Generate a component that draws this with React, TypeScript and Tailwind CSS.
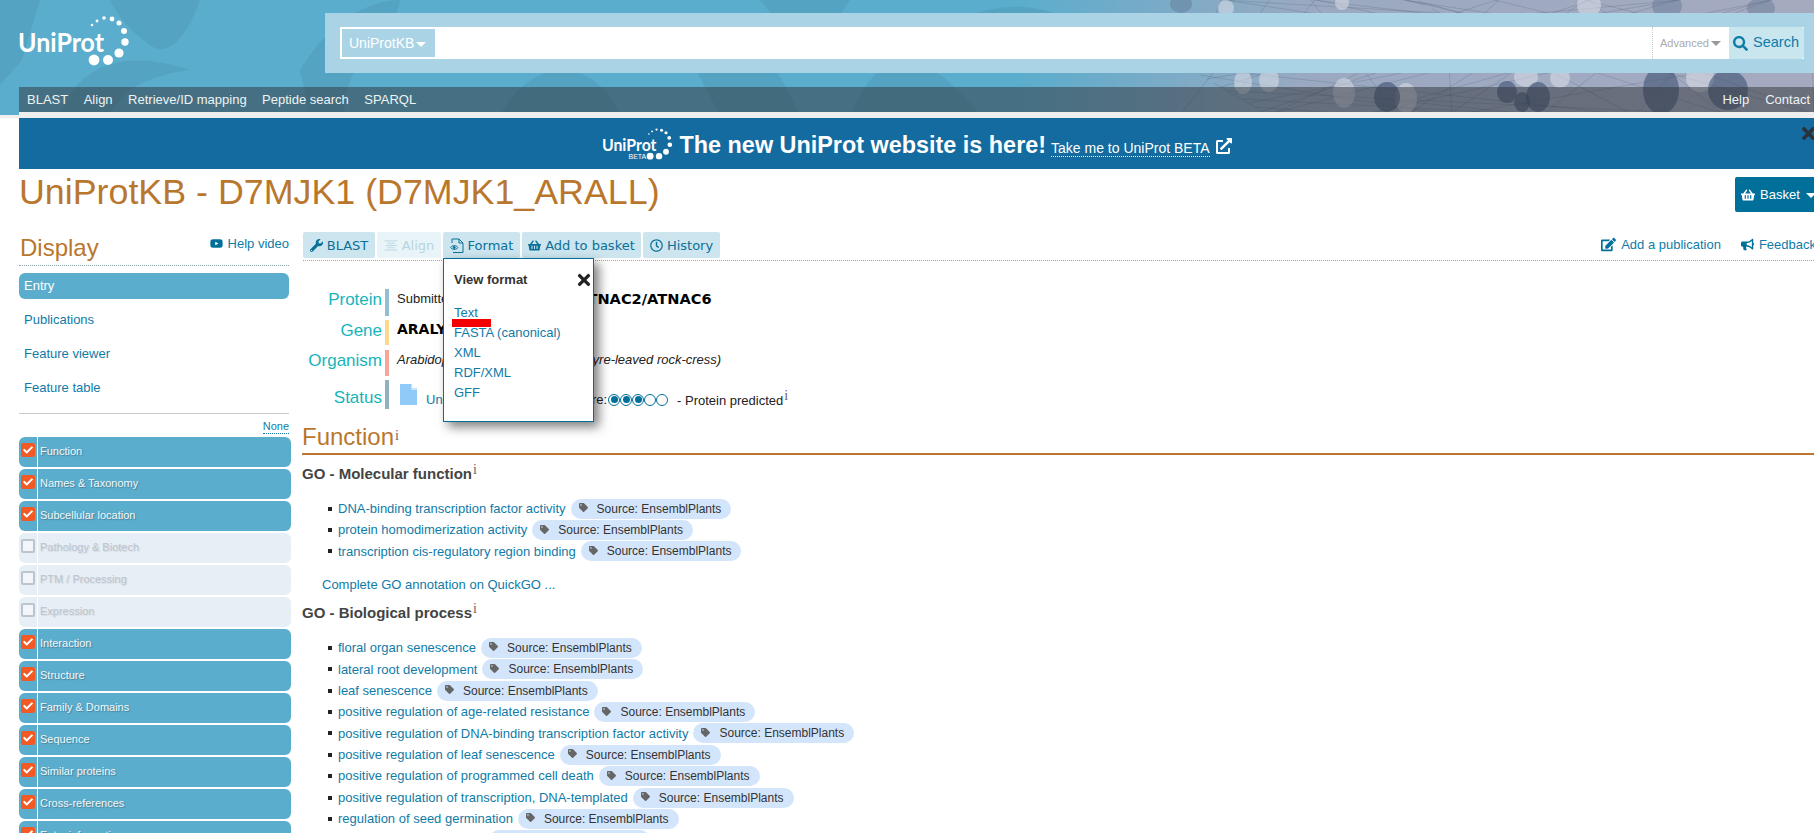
import { FaBullhorn, FaCheck, FaEdit, FaExternalLinkAlt, FaRegClock, FaSearch, FaShoppingBasket, FaTag, FaTimes, FaWrench, FaYoutube } from "react-icons/fa";

const sidebarItems = [
  { label: "Function", on: true },
  { label: "Names & Taxonomy", on: true },
  { label: "Subcellular location", on: true },
  { label: "Pathology & Biotech", on: false },
  { label: "PTM / Processing", on: false },
  { label: "Expression", on: false },
  { label: "Interaction", on: true },
  { label: "Structure", on: true },
  { label: "Family & Domains", on: true },
  { label: "Sequence", on: true },
  { label: "Similar proteins", on: true },
  { label: "Cross-references", on: true },
  { label: "Entry information", on: true },
];

const molecular = [
  "DNA-binding transcription factor activity",
  "protein homodimerization activity",
  "transcription cis-regulatory region binding",
];

const biological = [
  "floral organ senescence",
  "lateral root development",
  "leaf senescence",
  "positive regulation of age-related resistance",
  "positive regulation of DNA-binding transcription factor activity",
  "positive regulation of leaf senescence",
  "positive regulation of programmed cell death",
  "positive regulation of transcription, DNA-templated",
  "regulation of seed germination",
  "regulation of transcription",
];

const darkBalls = [
  [1387, 97, 13, 15],
  [1507, 92, 10, 11],
  [1538, 97, 12, 15],
  [1522, 102, 8, 10],
  [1661, 90, 18, 24],
  [1728, 90, 20, 20],
];

const topBalls = [
  [1667, 6, 15, 12],
  [1761, 8, 14, 10],
  [1181, 4, 11, 9],
];

const lightBalls = [
  [1344, 93, 11, 15],
  [1406, 98, 11, 15],
  [1269, 80, 10, 12],
  [1243, 82, 9, 12],
  [1526, 77, 12, 10],
  [1560, 78, 10, 10],
  [1589, 5, 12, 12],
  [1342, 3, 7, 7],
  [1226, 8, 8, 8],
  [1700, 78, 14, 14],
];

const blobs = [
  "M0 0 L40 0 L22 60 L0 85 Z",
  "M60 115 C80 60 130 50 190 70 C150 75 120 90 110 115 Z",
  "M110 0 L200 0 C190 30 170 60 150 45 C130 30 120 20 110 0 Z",
  "M300 70 C330 20 370 0 400 0 C395 40 340 60 345 115 L310 115 Z",
  "M500 115 C530 60 590 50 620 115 Z",
  "M680 40 C720 0 760 30 800 115 L720 115 Z",
  "M760 0 L850 0 L810 60 Z",
  "M850 115 C880 40 930 50 980 115 Z",
  "M960 20 C1000 0 1060 0 1090 40 C1060 70 990 60 960 20 Z",
];

function Logo({ beta }: { beta?: boolean }) {
  const dots = [
    [92, 25, 1.3],
    [97, 21, 1.4],
    [104, 18, 1.8],
    [112, 19, 2.4],
    [119, 23, 2.5],
    [124, 31, 3],
    [125, 42, 3.7],
    [119, 53, 4.6],
    [108, 60, 5],
    [94, 60, 5.4],
  ];
  return (
    <svg viewBox="15 14 115 52" className={beta ? "h-[33px] w-[73px]" : "h-[52px] w-[115px]"}>
      <text x="18" y="52" fill="#fff" fontSize="27" fontWeight="700" textLength="86" lengthAdjust="spacingAndGlyphs" fontFamily="Lato, sans-serif">
        UniProt
      </text>
      {beta && (
        <text x="60" y="65" fill="#fff" fontSize="11" fontFamily="Liberation Sans, sans-serif">
          BETA
        </text>
      )}
      {dots.map(([x, y, r]) => (
        <circle key={x} cx={x} cy={y} r={r} fill="#fff" />
      ))}
    </svg>
  );
}

function HeaderArt() {
  const lines = Array.from({ length: 46 }, (_, i) => {
    const x1 = 1180 + ((i * 137) % 640);
    const x2 = 1180 + ((i * 211 + 90) % 640);
    return <line key={i} x1={x1} y1={i % 2 ? 0 : 115} x2={x2} y2={(i * 37) % 115} stroke="#3f4c63" strokeOpacity="0.28" strokeWidth="0.7" />;
  });
  return (
    <svg viewBox="0 0 1814 115" className="absolute inset-0 h-[115px] w-[1814px]">
      <defs>
        <linearGradient id="headerBg" x1="0" y1="0" x2="1" y2="0">
          <stop offset="0.56" stopColor="#5aadcd" />
          <stop offset="0.72" stopColor="#9aa9c1" />
          <stop offset="1" stopColor="#a5aabf" />
        </linearGradient>
      </defs>
      <rect width="1814" height="115" fill="url(#headerBg)" />
      {blobs.map((d) => (
        <path key={d} d={d} fill="#3f7f9d" fillOpacity="0.22" />
      ))}
      {lines}
      {lightBalls.map(([cx, cy, rx, ry]) => (
        <ellipse key={cx} cx={cx} cy={cy} rx={rx} ry={ry} fill="#e4e6ee" fillOpacity="0.5" />
      ))}
      {topBalls.map(([cx, cy, rx, ry]) => (
        <ellipse key={cx} cx={cx} cy={cy} rx={rx} ry={ry} fill="#5d708f" fillOpacity="0.4" />
      ))}
      {darkBalls.map(([cx, cy, rx, ry]) => (
        <ellipse key={cx} cx={cx} cy={cy} rx={rx} ry={ry} fill="#3d5273" fillOpacity="0.6" />
      ))}
    </svg>
  );
}

function Caret({ className }: { className: string }) {
  return <span className={`inline-block h-0 w-0 border-x-[5px] border-t-[5px] border-x-transparent ${className}`} />;
}

function Info() {
  return <sup className="top-0 ml-[1px] align-[5px] font-['Liberation_Serif',serif] text-[14px] font-normal leading-none text-[#666]">i</sup>;
}

function ToolButton({ icon, label, disabled, className }: { icon: React.ReactNode; label: string; disabled?: boolean; className: string }) {
  return (
    <div
      className={`flex h-[26px] items-center justify-center gap-[4px] rounded-[2px] pt-[1px] font-['DejaVu_Sans',sans-serif] text-[13px] ${className} ${
        disabled ? "bg-[#e9f4f8] text-[#b5d6e2]" : "bg-[#cce5ee] text-[#0a7099]"
      }`}
    >
      {icon}
      <span>{label}</span>
    </div>
  );
}

function SidebarItem({ label, on }: { label: string; on: boolean }) {
  return (
    <div className={`flex h-[30px] w-[272px] rounded-[6px] ${on ? "bg-[#5aadcd]" : "bg-[#e6eff5]"}`}>
      <div className="flex w-[19px] shrink-0 justify-center border-r border-white pt-[6px]">
        {on ? (
          <span className="flex h-[14px] w-[14px] items-center justify-center rounded-[2px] bg-[#f15a24]">
            <FaCheck className="text-[10px] text-white" />
          </span>
        ) : (
          <span className="h-[14px] w-[14px] rounded-[2px] border-2 border-[#bcc4d0] bg-[#f2f6f9]" />
        )}
      </div>
      <span
        className={`pl-[2px] pt-[7px] text-[11px] leading-[14px] ${
          on ? "text-[#f2f8fb] [text-shadow:1px_1px_1px_#4a7f96]" : "text-[#bcc3cc] [text-shadow:1px_1px_1px_#d3d8de]"
        }`}
      >
        {label}
      </span>
    </div>
  );
}

function GoRow({ label }: { label: string }) {
  return (
    <li className="flex h-[21.4px] items-center">
      <span className="ml-[25px] mr-[6px] h-[4px] w-[4px] bg-[#222]" />
      <a className="text-[13px] text-[#0f7ba8]">{label}</a>
      <span className="ml-[5px] flex h-[20px] items-center rounded-full bg-[#d3e5fb] pl-[8px] pr-[10px] text-[12px] text-[#333]">
        <FaTag className="-mt-[2px] mr-[9px] text-[9px] text-[#666]" />
        Source: EnsemblPlants
      </span>
    </li>
  );
}

function EntryRow({ label, bar, className, labelClass, children }: { label: string; bar: string; className: string; labelClass: string; children: React.ReactNode }) {
  return (
    <div className={`flex ${className}`}>
      <div className={`w-[80px] text-right text-[17px] text-[#16b5bb] ${labelClass}`}>{label}</div>
      <div className={`ml-[3px] w-[4px] ${bar}`} />
      <div className="min-w-0 flex-1 whitespace-nowrap pl-[8px] text-[13px] text-[#222]">{children}</div>
    </div>
  );
}

export default function App() {
  return (
    <div className="h-[833px] w-[1814px] overflow-hidden bg-white font-['Liberation_Sans',Arial,sans-serif]">
      {/* top header */}
      <header className="relative h-[115px] w-[1814px]">
        <HeaderArt />
        <div className="relative flex h-[87px] items-start">
          <div className="ml-[15px] mt-[14px]">
            <Logo />
          </div>
          <div className="ml-[195px] mt-[13px] h-[60px] w-[1500px] bg-[#aad3e5] pl-[15px] pt-[14px]">
            <div className="flex h-[32px] w-[1464px] items-center bg-white pl-[2px]">
              <div className="flex h-[28px] w-[93px] items-center bg-[#aad3e5] pl-[7px] text-[14px] text-white">
                UniProtKB
                <Caret className="ml-[2px] mt-[3px] border-t-white" />
              </div>
              <div className="ml-auto flex h-[32px] w-[77px] items-center border-l border-dotted border-[#ccc] pl-[7px] text-[11px] text-[#aaa]">
                Advanced
                <Caret className="ml-[2px] border-t-[#999]" />
              </div>
              <div className="flex h-[32px] w-[75px] items-center rounded-r-[3px] bg-[#c9e5ee] pl-[4px] text-[14.5px] text-[#0f7ba8]">
                <FaSearch className="mr-[5px] text-[15px]" />
                Search
              </div>
            </div>
          </div>
        </div>
        <nav className="relative ml-[19px] flex h-[28px] w-[1795px] items-center justify-between border-b-[3px] border-[#eeeeee] bg-[#30333a]/50 pl-[8px] pr-[4px] text-[13px] text-[#eef3f5]">
          <div className="flex gap-[15.5px]">
            <span>BLAST</span>
            <span>Align</span>
            <span>Retrieve/ID mapping</span>
            <span>Peptide search</span>
            <span>SPARQL</span>
          </div>
          <div className="flex gap-[16px]">
            <span>Help</span>
            <span>Contact</span>
          </div>
        </nav>
      </header>
      <div className="h-[3px] bg-[#eeeeee]" />

      <div className="ml-[19px] w-[1810px]">
        {/* beta banner */}
        <div className="relative flex h-[51px] w-[1800px] items-center justify-center bg-[#136ba0] pr-[7px] text-white">
          <Logo beta />
          <span className="ml-[7px] mt-[5px] text-[23.4px] font-bold">The new UniProt website is here!</span>
          <a className="ml-[5px] mt-[9px] border-b border-dotted border-white text-[14px] leading-[16px]">Take me to UniProt BETA</a>
          <FaExternalLinkAlt className="ml-[6px] mt-[5px] text-[16px]" />
          <FaTimes className="absolute left-[1780px] top-[6px] text-[19px] text-[#2a3138]" />
        </div>

        <div className="flex h-[63px] w-[1800px] items-start justify-between">
          <h1 className="mt-[1px] text-[35.8px] leading-[44px] text-[#b9772e]">UniProtKB - D7MJK1 (D7MJK1_ARALL)</h1>
          <div className="mt-[8px] flex h-[35px] w-[84px] items-center rounded-[2px] bg-[#00709b] pl-[6px] pt-[1px] text-[13px] text-white">
            <FaShoppingBasket className="mr-[5px] text-[14px]" />
            Basket
            <Caret className="ml-[6px] border-t-white" />
          </div>
        </div>

        <div className="flex">
          {/* sidebar */}
          <aside className="w-[272px] shrink-0">
            <div className="flex h-[34px] w-[270px] items-start justify-between border-b border-dotted border-[#8aa4b0]">
              <span className="ml-[1px] mt-[1px] text-[24px] leading-[30px] text-[#b9772e]">Display</span>
              <span className="mt-[2px] flex items-center gap-[5px] text-[13px] text-[#0f7ba8]">
                <FaYoutube className="text-[#00709b]" />
                Help video
              </span>
            </div>
            <div className="mt-[7px] flex h-[26px] w-[270px] items-center rounded-[6px] bg-[#5aadcd] pl-[5px] text-[13px] text-white">Entry</div>
            <div className="flex w-[270px] flex-col border-b border-[#cccccc] pb-[8px] pl-[5px] pt-[4px] text-[13px] text-[#0f7ba8]">
              <span className="flex h-[34px] items-center">Publications</span>
              <span className="flex h-[34px] items-center">Feature viewer</span>
              <span className="flex h-[34px] items-center">Feature table</span>
            </div>
            <div className="flex h-[23px] w-[270px] justify-end pt-[5px] leading-[14px]">
              <span className="h-[15px] border-b border-dotted border-[#0f7ba8] text-[11px] text-[#0f7ba8]">None</span>
            </div>
            <div className="flex flex-col gap-[2px]">
              {sidebarItems.map((item) => (
                <SidebarItem key={item.label} label={item.label} on={item.on} />
              ))}
            </div>
          </aside>

          {/* main */}
          <main className="relative ml-[12px] w-[1513px] shrink-0">
            <div className="flex h-[29px] items-start justify-between border-b border-dotted border-[#6fb2c9]">
              <div className="flex gap-[2px]">
                <ToolButton className="w-[72px]" icon={<FaWrench className="text-[13px]" />} label="BLAST" />
                <ToolButton
                  className="w-[64px]"
                  disabled
                  icon={
                    <svg viewBox="0 0 14 12" className="h-[11px] w-[14px]" stroke="currentColor" strokeWidth="1">
                      <path d="M0 1h14M3 3.5h8M1 6h12M3 8.5h8M0 11h14" />
                    </svg>
                  }
                  label="Align"
                />
                <ToolButton
                  className="w-[77px]"
                  icon={
                    <svg viewBox="0 0 14 15" className="h-[15px] w-[14px]" fill="none" stroke="currentColor" strokeWidth="1">
                      <path d="M2 5V1h7l4 4v9.5H3" />
                      <path d="M9 1v4h4" />
                      <path d="M0.5 9.5C2.5 7 6 7 8 9.5C6 12 2.5 12 0.5 9.5Z" />
                      <circle cx="4.2" cy="9.5" r="1" fill="currentColor" />
                    </svg>
                  }
                  label="Format"
                />
                <ToolButton className="w-[119px]" icon={<FaShoppingBasket className="text-[13px]" />} label="Add to basket" />
                <ToolButton className="w-[77px]" icon={<FaRegClock className="text-[13px]" />} label="History" />
              </div>
              <div className="mt-[3px] flex text-[13px] text-[#0f7ba8]">
                <span className="flex items-center gap-[5px]">
                  <FaEdit className="text-[15px] text-[#00709b]" />
                  Add a publication
                </span>
                <span className="ml-[20px] flex items-center gap-[5px]">
                  <FaBullhorn className="text-[13px] text-[#00709b]" />
                  Feedback
                </span>
              </div>
            </div>

            {/* format popup */}
            <div className="absolute left-[140px] top-[26px] z-10 h-[164px] w-[151px] border border-[#00709b] bg-white pl-[10px] shadow-[5px_5px_10px_rgba(0,0,0,0.5)]">
              <div className="relative mt-[13px] text-[13px] font-bold leading-[16px] text-[#333]">
                View format
                <FaTimes className="absolute left-[121px] top-[-1px] text-[18px] text-[#222]" />
              </div>
              <ul className="mt-[15px] flex flex-col text-[13px] leading-[20px] text-[#0f7ba8]">
                <li className="relative">
                  Text
                  <span className="absolute left-[-2px] top-[16px] h-[8px] w-[39px] bg-[#f50000]" />
                </li>
                <li>FASTA (canonical)</li>
                <li>XML</li>
                <li>RDF/XML</li>
                <li>GFF</li>
              </ul>
            </div>

            <div className="ml-[-1px] mt-[28px] flex flex-col">
              <EntryRow label="Protein" bar="bg-[#92bfd3]" className="h-[27px]" labelClass="leading-[22px]">
                <div className="flex h-[20px] items-center">
                  Submitted name:
                  <b className="ml-[82px] font-['DejaVu_Sans',sans-serif] text-[14.6px] text-black">ATNAC2/ATNAC6</b>
                </div>
              </EntryRow>
              <EntryRow label="Gene" bar="bg-[#fbd98c]" className="mt-[4px] h-[25px]" labelClass="leading-[22px]">
                <b className="font-['DejaVu_Sans',sans-serif] text-[14px] leading-[17px] text-black">ARALYDRAFT_348793</b>
              </EntryRow>
              <EntryRow label="Organism" bar="bg-[#f7a599]" className="mt-[5px] h-[26px]" labelClass="leading-[22px]">
                <i className="leading-[20px]">Arabidopsis lyrata subsp. lyrata (Lyre-leaved rock-cress)</i>
              </EntryRow>
              <EntryRow label="Status" bar="bg-[#93b0bf]" className="mt-[4px] h-[29px]" labelClass="leading-[36px]">
                <div className="flex h-[29px] items-center">
                  <svg viewBox="0 0 17 21" className="ml-[3px] h-[21px] w-[17px]">
                    <path d="M0 0h11l6 6v15H0z" fill="#90caf9" />
                    <path d="M11 0l6 6h-6z" fill="#fff" />
                    <path d="M11 0v5h6" fill="none" stroke="#90caf9" strokeWidth="1" />
                  </svg>
                  <div className="mt-[10px] flex items-center">
                    <span className="ml-[9px] text-[#0f7ba8]">Unreviewed</span>
                    <span className="ml-[4px]"> - Annotation score:</span>
                    <span className="ml-[1px] flex">
                      {[1, 2, 3, 4, 5].map((n) => (
                        <span key={n} className="flex h-[12px] w-[12px] items-center justify-center rounded-full border border-[#00709b]">
                          {n < 4 && <span className="h-[7px] w-[7px] rounded-full bg-[#00709b]" />}
                        </span>
                      ))}
                    </span>
                    <span className="ml-[9px]">
                      - Protein predicted
                      <Info />
                    </span>
                  </div>
                </div>
              </EntryRow>
            </div>

            {/* function section */}
            <div className="ml-[-1px] mt-[13px] h-[33px] border-b-2 border-[#b9772e] text-[24px] leading-[30px] text-[#b9772e]">
              Function
              <Info />
            </div>
            <h3 className="ml-[-1px] mt-[8px] text-[15px] font-bold leading-[20px] text-[#444]">
              GO - Molecular function
              <Info />
            </h3>
            <ul className="mt-[14px]">
              {molecular.map((label) => (
                <GoRow key={label} label={label} />
              ))}
            </ul>
            <div className="ml-[19px] mt-[15px] text-[13px] leading-[16px] text-[#0f7ba8]">Complete GO annotation on QuickGO ...</div>
            <h3 className="ml-[-1px] mt-[9px] text-[15px] font-bold leading-[20px] text-[#444]">
              GO - Biological process
              <Info />
            </h3>
            <ul className="mt-[14px]">
              {biological.map((label) => (
                <GoRow key={label} label={label} />
              ))}
            </ul>
          </main>
        </div>
      </div>
    </div>
  );
}
